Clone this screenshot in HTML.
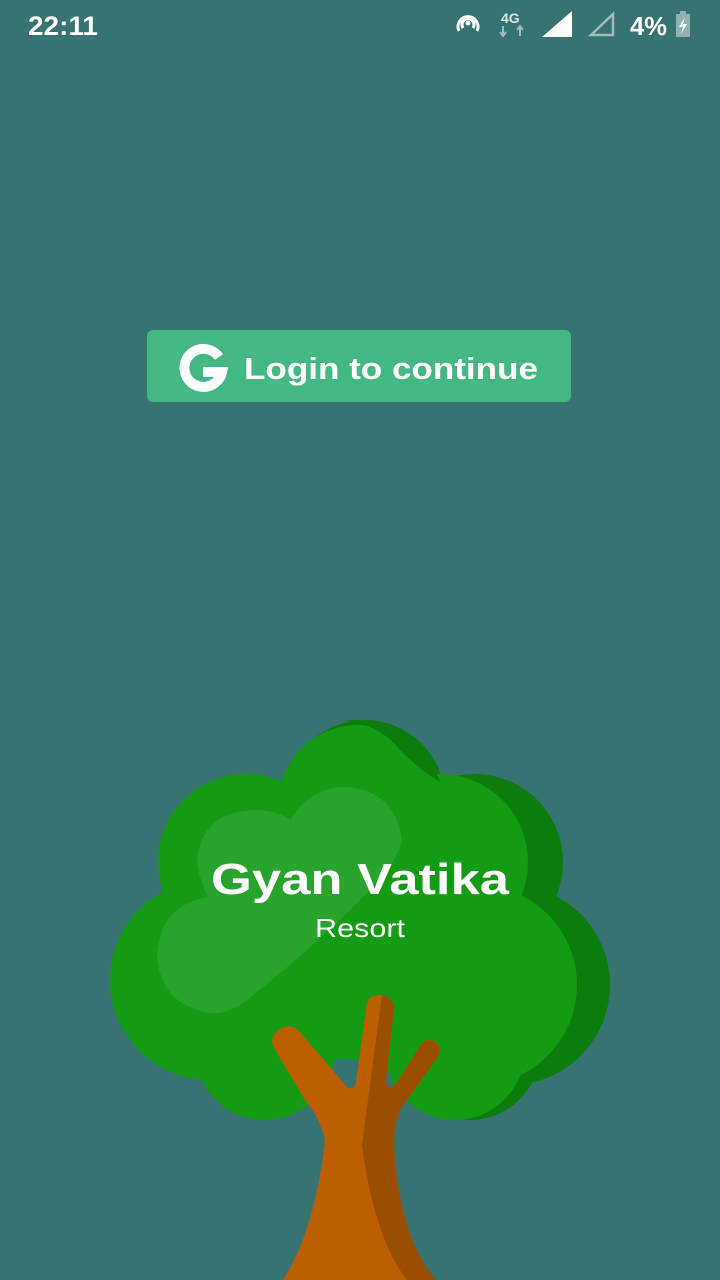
<!DOCTYPE html>
<html><head><meta charset="utf-8"><style>
html,body{margin:0;padding:0;width:720px;height:1280px;overflow:hidden;background:#367371;font-family:"Liberation Sans",sans-serif}
svg{position:absolute;left:0;top:0}
</style></head><body>
<svg width="720" height="1280" viewBox="0 0 720 1280">
<text x="28" y="35" fill="#fff" font-size="27" font-weight="bold" textLength="70" lengthAdjust="spacingAndGlyphs">22:11</text>
<g fill="none" stroke="#fff" stroke-width="3">
<path d="M459 31 A10 10 0 1 1 477 31"/><path d="M463 28 A6 6 0 1 1 473 28"/>
</g>
<circle cx="468" cy="23" r="2.5" fill="#fff"/>
<text x="501" y="23" fill="#d9e6e5" font-size="14" font-weight="bold">4G</text>
<path d="M503 26v9M500 32l3 4 3-4M520 36v-9M517 30l3-4 3 4" stroke="#9fbdbb" stroke-width="2" fill="none"/>
<path d="M542 37 L572 11 L572 37Z" fill="#fff"/>
<path d="M591 35 L613 14 L613 35Z" fill="none" stroke="#9fbdbb" stroke-width="2.5"/>
<text x="630" y="35" fill="#fff" font-size="26" font-weight="bold" textLength="37" lengthAdjust="spacingAndGlyphs">4%</text>
<rect x="676" y="14" width="14" height="23" fill="#8fb3b1"/><rect x="680" y="11" width="6" height="4" fill="#8fb3b1"/>
<path d="M685 17 L679 27 L683 27 L681 34 L687 24 L683 24Z" fill="#fff"/>

<rect x="147" y="330" width="424" height="72" rx="6" fill="#43b883"/>
<path d="M219 357 A19 19 0 1 0 222 372 L203 372" fill="none" stroke="#fff" stroke-width="10"/>
<text x="244" y="379" fill="#fff" font-size="31" font-weight="bold" textLength="294" lengthAdjust="spacingAndGlyphs">Login to continue</text>

<g fill="#0c7c0c">
<circle cx="365" cy="800" r="80"/>
<circle cx="475" cy="862" r="88"/>
<circle cx="510" cy="985" r="100"/>
<circle cx="470" cy="1050" r="70"/>
<rect x="300" y="850" width="240" height="200"/>
</g>
<g fill="#139b13">
<circle cx="358" cy="805" r="80"/>
<circle cx="246" cy="862" r="88"/>
<circle cx="440" cy="862" r="88"/>
<circle cx="210" cy="980" r="100"/>
<circle cx="477" cy="985" r="100"/>
<circle cx="265" cy="1050" r="70"/>
<circle cx="455" cy="1050" r="70"/>
<rect x="200" y="830" width="320" height="230"/>
</g>
<path d="M440 782 Q420 770 400 750 Q380 725 345 720 L365 720 Q420 725 440 782Z" fill="#0c7c0c"/>
<path d="M290 820 Q310 787 345 787 Q395 790 402 840 Q400 860 360 900 Q300 960 240 1005 Q222 1015 210 1013 Q160 1005 157 955 Q160 905 208 897 Q195 870 198 855 Q205 810 258 810 Q278 811 290 820Z" fill="#28a32c"/>
<path d="M283 1280 Q315 1230 325 1140 Q320 1118 305 1100 L274 1048 Q268 1035 282 1028 Q292 1024 298 1030 L348 1088 Q354 1090 356 1082 L367 1002 Q370 995 381 995 Q392 996 394 1007 L386 1082 Q388 1090 395 1085 L422 1043 Q432 1036 439 1046 Q442 1052 437 1058 L400 1110 Q392 1130 395 1160 Q402 1240 436 1280Z" fill="#bb5f00"/>
<path d="M382 995 Q392 996 394 1007 L386 1082 Q388 1090 395 1085 L422 1043 Q432 1036 439 1046 Q442 1052 437 1058 L400 1110 Q392 1130 395 1160 Q402 1240 436 1280 L407 1280 Q375 1240 362 1145Z" fill="#9a4f00"/>

<text x="360" y="894" text-anchor="middle" fill="#fff" font-size="44" font-weight="bold" textLength="298" lengthAdjust="spacingAndGlyphs">Gyan Vatika</text>
<text x="360" y="937" text-anchor="middle" fill="#fff" font-size="26" textLength="90" lengthAdjust="spacingAndGlyphs">Resort</text>
</svg>
</body></html>
